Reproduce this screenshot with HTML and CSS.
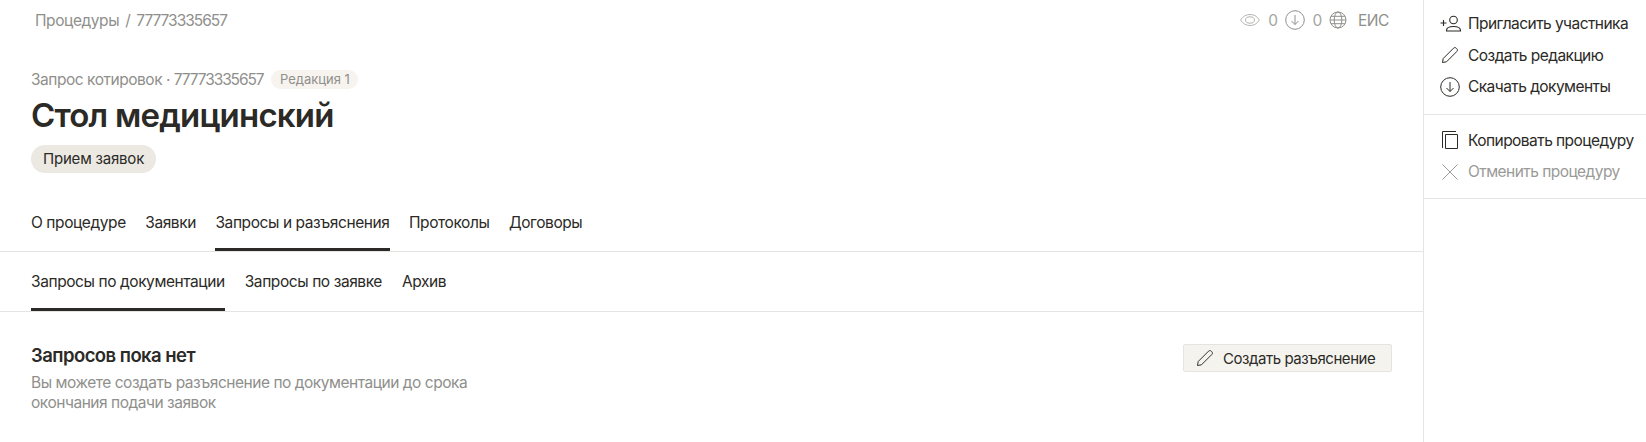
FILE: index.html
```html
<!DOCTYPE html>
<html lang="en">
<head>
    <meta charset="UTF-8">
    <title>Стол медицинский</title>
    <link rel="stylesheet" href="styles.css">
</head>
<body>
    <div class="page">
        <!-- Main Content -->
        <div class="main">
            <div class="topbar">
                <div class="crumbs">
                    <a href="#">Процедуры</a>
                    <span class="crumb-sep">/</span>
                    <a href="#" class="num">77773335657</a>
                </div>
                <div class="stats">
                    <svg class="stat-eye" width="20" height="14" viewBox="0 0 20 14" fill="none" stroke="#b5b5b2" stroke-width="1"><path d="M0.600 7C3 3.200 6.200 1.500 10 1.500S17 3.200 19.400 7C17 10.800 13.800 12.500 10 12.500S3 10.800 0.600 7Z"/><ellipse cx="10" cy="7" rx="4.500" ry="3.200"/></svg>
                    <span class="stat-num">0</span>
                    <svg class="stat-down" width="20" height="20" viewBox="0 0 20 20" fill="none" stroke="#8f8f8c" stroke-width="1"><circle cx="10" cy="10" r="9.300"/><path d="M10 5V14.500M6.500 11L10 14.500L13.500 11"/></svg>
                    <span class="stat-num">0</span>
                    <svg width="18" height="18" viewBox="0 0 18 18" fill="none" stroke="#8f8f8c" stroke-width="1"><circle cx="9" cy="9" r="8"/><ellipse cx="9" cy="9" rx="3.800" ry="8"/><path d="M1 9H17M2 5.300H16M2 12.700H16"/></svg>
                    <span class="stat-eis">ЕИС</span>
                </div>
            </div>

            <div class="header">
                <div class="meta">
                    <span>Запрос котировок · <span class="num">77773335657</span></span>
                    <span class="edition">Редакция 1</span>
                </div>
                <h1>Стол медицинский</h1>
                <span class="status">Прием заявок</span>
            </div>

            <!-- Tabs -->
            <div class="tabs tabs-main">
                <a href="#">О процедуре</a>
                <a href="#">Заявки</a>
                <a href="#" class="active">Запросы и разъяснения</a>
                <a href="#">Протоколы</a>
                <a href="#">Договоры</a>
            </div>
            <div class="tabs tabs-sub">
                <a href="#" class="active">Запросы по документации</a>
                <a href="#">Запросы по заявке</a>
                <a href="#">Архив</a>
            </div>

            <!-- Empty state -->
            <div class="empty">
                <div>
                    <h2>Запросов пока нет</h2>
                    <p>Вы можете создать разъяснение по документации до срока окончания подачи заявок</p>
                </div>
                <button class="btn">
                    <svg width="18" height="18" viewBox="0 0 18 18" fill="none" stroke="#33312c" stroke-width="1"><path d="M1.500 16.500L2.200 12.500L12.500 2.200C13.300 1.400 14.500 1.400 15.300 2.200L15.800 2.700C16.600 3.500 16.600 4.700 15.800 5.500L5.500 15.800Z"/></svg>
                    Создать разъяснение
                </button>
            </div>
        </div>

        <!-- Side menu -->
        <div class="side">
            <div class="side-group">
                <a href="#" class="side-item">
                    <span class="side-icon"><svg width="22" height="20" viewBox="0 0 22 20" fill="none" stroke="#2b2a26" stroke-width="1.100"><path d="M0.500 9H6.500M3.500 6V12"/><circle cx="13.500" cy="6" r="3.800"/><path d="M6.500 16.500C6.500 13.500 9.500 12.500 13.500 12.500S20.500 13.500 20.500 16.500V17H6.500Z"/></svg></span>
                    Пригласить участника
                </a>
                <a href="#" class="side-item">
                    <span class="side-icon side-icon-small"><svg width="18" height="18" viewBox="0 0 18 18" fill="none" stroke="#2b2a26" stroke-width="1"><path d="M1.500 16.500L2.200 12.500L12.500 2.200C13.300 1.400 14.500 1.400 15.300 2.200L15.800 2.700C16.600 3.500 16.600 4.700 15.800 5.500L5.500 15.800Z"/></svg></span>
                    Создать редакцию
                </a>
                <a href="#" class="side-item">
                    <span class="side-icon"><svg width="20" height="20" viewBox="0 0 20 20" fill="none" stroke="#2b2a26" stroke-width="1"><circle cx="10" cy="10" r="9.300"/><path d="M10 5V14.500M6.500 11L10 14.500L13.500 11"/></svg></span>
                    Скачать документы
                </a>
            </div>
            <div class="side-group side-group-last">
                <a href="#" class="side-item">
                    <span class="side-icon side-icon-small"><svg width="18" height="20" viewBox="0 0 18 20" fill="none" stroke="#2b2a26" stroke-width="1"><path d="M1.500 18V1.500H15"/><path d="M4.500 4.500H16.500V18.500H4.500Z"/></svg></span>
                    Копировать процедуру
                </a>
                <a href="#" class="side-item disabled">
                    <span class="side-icon side-icon-small"><svg width="18" height="18" viewBox="0 0 18 18" fill="none" stroke="#9a9a97" stroke-width="1"><path d="M1.500 1.500L16.500 16.500M16.500 1.500L1.500 16.500"/></svg></span>
                    Отменить процедуру
                </a>
            </div>
        </div>
    </div>
</body>
</html>
```

FILE: styles.css
```css
body {
    font-family: Inter, "Liberation Sans", sans-serif;
    font-size: 15.5px;
    color: #2b2a26;
    background-color: #fff;
    margin: 0;
    padding: 0;
    letter-spacing: -0.42px;
}

a {
    color: inherit;
    text-decoration: none;
}

.num {
    letter-spacing: -1px;
}

.page {
    display: flex;
    height: 442px;
    overflow: hidden;
}

.main {
    width: 1423px;
    flex-shrink: 0;
}

/* Top bar */
.topbar {
    display: flex;
    justify-content: space-between;
    align-items: center;
    height: 40px;
    padding: 0 34px 0 35px;
}

.crumbs {
    color: #8f8f8c;
    display: flex;
    gap: 6px;
}

.stats {
    display: flex;
    align-items: center;
    gap: 5px;
    color: #a5a5a2;
}

.stat-eye {
    margin-right: 3px;
}

.stat-num {
    margin-right: 2px;
}

.stat-down {
    margin-right: 3px;
}

.stat-eis {
    color: #8f8f8c;
    margin-left: 6px;
}

/* Header */
.header {
    padding: 29px 31px 0;
    height: 150px;
    box-sizing: border-box;
}

.meta {
    display: flex;
    align-items: center;
    gap: 8px;
    color: #8f8f8c;
    height: 20px;
    letter-spacing: -0.47px;
}

.meta .num {
    letter-spacing: -1.1px;
}

.edition {
    background-color: #f7f4ef;
    border-radius: 10px;
    font-size: 13px;
    padding: 0 8.5px;
    line-height: 19px;
    letter-spacing: 0;
}

h1 {
    font-size: 33px;
    font-weight: 600;
    line-height: 40px;
    letter-spacing: -0.8px;
    margin: 6px 0 10px;
}

.status {
    display: inline-block;
    background-color: #ece9e3;
    border-radius: 14px;
    line-height: 28px;
    padding: 0 12px;
    font-size: 15px;
    letter-spacing: -0.2px;
}

/* Tabs */
.tabs {
    display: flex;
    gap: 20px;
    padding: 0 31px;
    border-bottom: 1px solid #e4e4e2;
}

.tabs-main {
    height: 61px;
    line-height: 65px;
    gap: 19.5px;
}

.tabs-sub {
    height: 59px;
    line-height: 59px;
}

.tabs a {
    display: block;
    box-sizing: border-box;
    height: 100%;
}

.tabs a.active {
    border-bottom: 3px solid #2b2a26;
}

/* Empty state */
.empty {
    display: flex;
    justify-content: space-between;
    align-items: flex-start;
    padding: 31px 31px 0;
}

h2 {
    font-size: 18.5px;
    font-weight: 600;
    line-height: 24px;
    letter-spacing: -0.55px;
    margin: 0 0 6px;
}

.empty p {
    color: #8f8f8c;
    line-height: 20px;
    letter-spacing: -0.47px;
    margin: 0;
    width: 450px;
}

.btn {
    display: flex;
    align-items: center;
    gap: 9px;
    font: inherit;
    font-size: 15px;
    letter-spacing: -0.45px;
    color: inherit;
    height: 28px;
    width: 209px;
    margin-top: 1px;
    padding: 0 12px;
    background-color: #f5f3ee;
    border: 1px solid #e4e4e2;
    border-radius: 2px;
}

/* Side menu */
.side {
    flex: 1;
    border-left: 1px solid #e4e4e2;
    letter-spacing: -0.55px;
}

.side-group {
    padding: 8px 0 11px;
    border-bottom: 1px solid #e4e4e2;
}

.side-group-last {
    padding: 10px 0;
}

.side-item {
    display: flex;
    align-items: center;
    height: 31.5px;
    padding-left: 16px;
}

.side-icon {
    width: 28px;
    display: flex;
    align-items: center;
}

.side-icon-small {
    padding-left: 1px;
    width: 27px;
}

.side-item.disabled {
    color: #9a9a97;
}
```
